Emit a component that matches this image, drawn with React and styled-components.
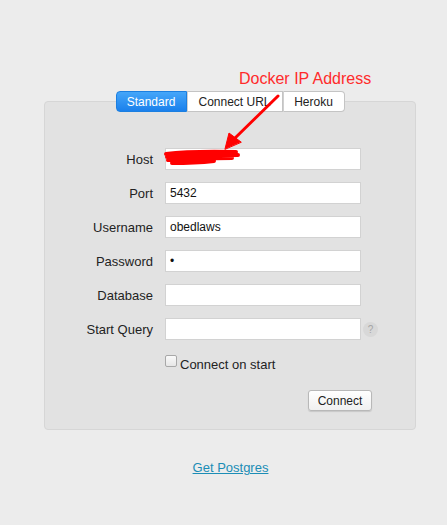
import React from "react";
import styled, { createGlobalStyle } from "styled-components";

const Global = createGlobalStyle`
  html, body { margin: 0; padding: 0; background: #ececec; }
  body { font-family: "Liberation Sans", Arial, sans-serif; font-size: 13px; color: #222; }
`;

const Page = styled.div`
  position: relative;
  width: 447px;
  height: 525px;
  padding-top: 91px;
  box-sizing: border-box;
  overflow: hidden;
`;

const Annotation = styled.div`
  position: absolute;
  left: 239px;
  top: 70px;
  font-size: 16px;
  color: #ff2b2b;
  white-space: nowrap;
  z-index: 3;
`;

const Overlay = styled.svg`
  position: absolute;
  left: 0;
  top: 0;
  pointer-events: none;
  z-index: 4;
`;

const TabBar = styled.div`
  display: flex;
  justify-content: center;
  margin-left: 44px;
  width: 372px;
  margin-bottom: -11px;
  position: relative;
  z-index: 2;
`;

const Tab = styled.div`
  height: 21px;
  width: ${(p) => p.$w}px;
  box-sizing: border-box;
  display: flex;
  align-items: center;
  justify-content: center;
  font-size: 12px;
  border: 1px solid ${(p) => (p.$active ? "#1c7fe0" : "#c4c4c4")};
  border-left-width: ${(p) => (p.$first ? 1 : 0)}px;
  background: ${(p) =>
    p.$active ? "linear-gradient(#45a6f9, #1a80ec)" : "#ffffff"};
  color: ${(p) => (p.$active ? "#ffffff" : "#222")};
  border-radius: ${(p) =>
    p.$first ? "4px 0 0 4px" : p.$last ? "0 4px 4px 0" : "0"};
  & + & { border-left: 1px solid #d0d0d0; }
`;

const Panel = styled.div`
  margin-left: 44px;
  width: 372px;
  box-sizing: border-box;
  background: #e2e2e2;
  border: 1px solid #d6d6d6;
  border-radius: 4px;
  padding: 46px 0 18px;
`;

const Form = styled.div`
  display: grid;
  grid-template-columns: 108px 196px;
  column-gap: 12px;
  row-gap: 12px;
  align-items: center;
`;

const Label = styled.label`
  text-align: right;
  font-size: 13px;
  color: #222;
`;

const Field = styled.div`
  display: flex;
  align-items: center;
  position: relative;
`;

const Input = styled.div`
  width: 196px;
  height: 22px;
  flex: none;
  box-sizing: border-box;
  background: #fff;
  border: 1px solid #d2d2d2;
  padding-left: 4px;
  display: flex;
  align-items: center;
  font-size: 12px;
  color: #111;
`;

const Help = styled.span`
  position: absolute;
  left: 198px;
  width: 15px;
  height: 15px;
  border-radius: 50%;
  background: #d8d8d8;
  color: #a5a5a5;
  font-size: 10px;
  display: flex;
  align-items: center;
  justify-content: center;
`;

const CheckRow = styled.div`
  grid-column: 2;
  display: flex;
  align-items: flex-start;
  gap: 3px;
  margin-top: 3px;
  font-size: 13px;
`;

const Box = styled.span`
  width: 12px;
  height: 12px;
  box-sizing: border-box;
  border: 1px solid #a8a8a8;
  border-radius: 2px;
  background: linear-gradient(#fafafa, #e6e6e6);
`;

const CheckText = styled.span`
  margin-top: 2px;
`;

const Actions = styled.div`
  display: flex;
  justify-content: flex-end;
  padding-right: 43px;
  margin-top: 18px;
`;

const Button = styled.button`
  height: 21px;
  width: 64px;
  padding: 0;
  font-family: "Liberation Sans", Arial, sans-serif;
  font-size: 12px;
  color: #222;
  background: linear-gradient(#ffffff, #f0f0f0);
  border: 1px solid #b8b8b8;
  border-radius: 3px;
  box-shadow: 0 1px 1px rgba(0, 0, 0, 0.12);
`;

const Footer = styled.div`
  text-align: center;
  padding-left: 14px;
  margin-top: 30px;
`;

const Link = styled.a`
  color: #1b8db6;
  text-decoration: underline;
  font-size: 13px;
`;

const rows = [
  ["Host", ""],
  ["Port", "5432"],
  ["Username", "obedlaws"],
  ["Password", "•"],
  ["Database", ""],
];

export default function App() {
  return (
    <Page>
      <Global />
      <Annotation>Docker IP Address</Annotation>
      <Overlay width="447" height="525" viewBox="0 0 447 525">
        <g fill="#ff0000" stroke="#ff0000" strokeLinecap="round">
          <line x1="278" y1="96" x2="232" y2="141" strokeWidth="3" />
          <polygon points="225,149 229,133 241,142" strokeWidth="1" />
          <path
            d="M166 154 Q190 151 236 152 M167 157 Q200 155 238 155 M168 160 Q195 158 232 158 M172 163 Q195 163 214 161 M170 158 L225 158"
            fill="none"
            strokeWidth="4"
          />
        </g>
      </Overlay>
      <TabBar>
        <Tab $active $first $w={71}>Standard</Tab>
        <Tab $w={96}>Connect URL</Tab>
        <Tab $last $w={62}>Heroku</Tab>
      </TabBar>
      <Panel>
        <Form>
          {rows.map(([l, v]) => (
            <React.Fragment key={l}>
              <Label>{l}</Label>
              <Field>
                <Input>{v}</Input>
              </Field>
            </React.Fragment>
          ))}
          <Label>Start Query</Label>
          <Field>
            <Input />
            <Help>?</Help>
          </Field>
          <CheckRow>
            <Box />
            <CheckText>Connect on start</CheckText>
          </CheckRow>
        </Form>
        <Actions>
          <Button>Connect</Button>
        </Actions>
      </Panel>
      <Footer>
        <Link href="#">Get Postgres</Link>
      </Footer>
    </Page>
  );
}
